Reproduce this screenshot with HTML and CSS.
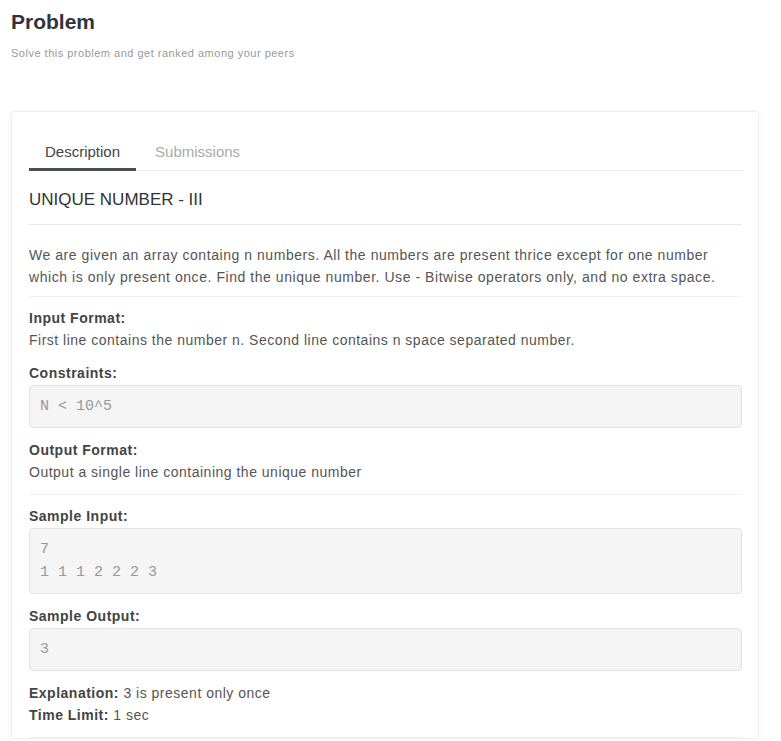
FILE: index.html
```html
<!DOCTYPE html>
<html lang="en">
<head>
<meta charset="utf-8">
<title>Problem</title>
<link rel="stylesheet" href="styles.css">
</head>
<body>
<div class="page">
  <header class="page-head">
    <h1 class="page-title">Problem</h1>
    <p class="page-sub">Solve this problem and get ranked among your peers</p>
  </header>

  <section class="card">
    <nav class="tabs">
      <a class="tab active">Description</a>
      <a class="tab">Submissions</a>
    </nav>

    <div class="prob-title">UNIQUE NUMBER - III</div>

    <div class="block desc">
      <p>We are given an array containg n numbers. All the numbers are present thrice except for one number which is only present once. Find the unique number. Use - Bitwise operators only, and no extra space.</p>
    </div>

    <div class="block">
      <div class="label">Input Format:</div>
      <div class="text">First line contains the number n. Second line contains n space separated number.</div>
      <div class="label gap">Constraints:</div>
      <pre class="code">N &lt; 10^5</pre>
      <div class="label gap">Output Format:</div>
      <div class="text">Output a single line containing the unique number</div>
    </div>

    <div class="block">
      <div class="label">Sample Input:</div>
      <pre class="code">7
1 1 1 2 2 2 3</pre>
      <div class="label gap">Sample Output:</div>
      <pre class="code">3</pre>
      <div class="text gap"><span class="label-inline">Explanation:</span> 3 is present only once</div>
      <div class="text"><span class="label-inline">Time Limit:</span> 1 sec</div>
    </div>
  </section>
</div>
</body>
</html>
```

FILE: styles.css
```css
* { box-sizing: border-box; }

html, body {
  margin: 0;
  padding: 0;
  background: #ffffff;
}

body {
  font-family: "Liberation Sans", Arial, sans-serif;
  color: #555;
}

.page {
  padding: 9px 22px 0 11px;
}

.page-title {
  margin: 0;
  font-size: 21px;
  line-height: 26px;
  font-weight: 700;
  color: #2f353b;
}

.page-sub {
  margin: 11px 0 0;
  font-size: 11px;
  line-height: 14px;
  letter-spacing: 0.5px;
  color: #999;
}

.card {
  margin-top: 51px;
  background: #fff;
  border: 1px solid #f0f0f0;
  border-radius: 4px;
  box-shadow: 0 1px 6px rgba(0, 0, 0, 0.06);
  padding: 20px 16px 0 17px;
}

.tabs {
  display: flex;
  border-bottom: 1px solid #e8e8e8;
}

.tab {
  display: block;
  padding: 10px 16px 6px;
  font-size: 15px;
  line-height: 20px;
  color: #aaa;
  border-bottom: 3px solid transparent;
  margin-bottom: -1px;
  margin-right: 3px;
}

.tab.active {
  color: #444;
  border-bottom-color: #4a4f54;
}

.prob-title {
  padding: 18px 0 13px;
  font-size: 17px;
  line-height: 22px;
  color: #333;
  border-bottom: 1px solid #e8e8e8;
}

.block {
  padding: 10px 0 11px;
  border-bottom: 1px solid #f0f0f0;
}

.desc {
  padding: 19px 0 8px;
}

.desc p {
  margin: 0;
  font-size: 14px;
  line-height: 22px;
  letter-spacing: 0.55px;
  color: #555;
}

.label {
  font-size: 14px;
  line-height: 22px;
  font-weight: 700;
  letter-spacing: 0.5px;
  color: #444;
}

.label-inline {
  font-weight: 700;
  color: #444;
}

.text {
  font-size: 14px;
  line-height: 22px;
  letter-spacing: 0.5px;
  color: #555;
}

.gap {
  margin-top: 11px;
}

.code {
  margin: 1px 0 0;
  padding: 9px 10px;
  font-family: "Liberation Mono", "Courier New", monospace;
  font-size: 15px;
  line-height: 23px;
  color: #999;
  background: #f5f5f5;
  border: 1px solid #e3e3e3;
  border-radius: 4px;
  white-space: pre;
}
```
